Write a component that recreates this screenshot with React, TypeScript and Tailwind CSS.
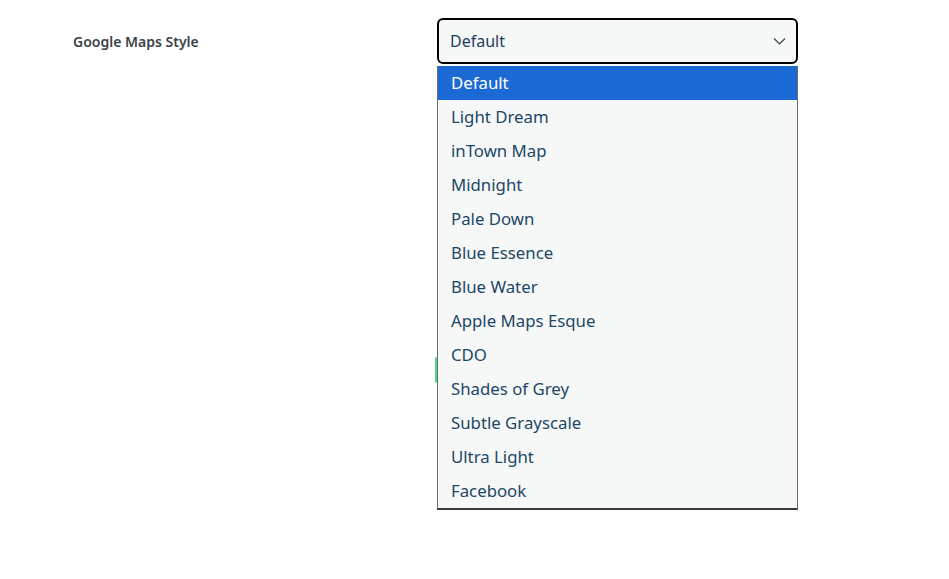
const styles = [
  "Default",
  "Light Dream",
  "inTown Map",
  "Midnight",
  "Pale Down",
  "Blue Essence",
  "Blue Water",
  "Apple Maps Esque",
  "CDO",
  "Shades of Grey",
  "Subtle Grayscale",
  "Ultra Light",
  "Facebook",
];

export default function App() {
  return (
    <div className="relative h-[579px] w-[949px] bg-white font-['Noto_Sans',sans-serif]">
      <div className="flex items-start pt-[18px]">
        <div className="w-[437px] pl-[73px] pt-[13px] text-[14px] font-semibold text-[#3c434a]">
          Google Maps Style
        </div>
        <div className="relative w-[361px]">
          <div className="flex h-[46px] items-center justify-between rounded-[6px] border-2 border-black bg-[#f6f7f7] pl-[11px] pr-[10px] text-[16px] text-[#1d3d5c]">
            <span>Default</span>
            <svg width="13" height="8" viewBox="0 0 13 8" fill="none" stroke="#3c434a" strokeWidth="1.2">
              <path d="M1 1.5l5.5 5.5 5.5-5.5" />
            </svg>
          </div>
          {/* partially hidden control behind the open list */}
          <div className="absolute left-[-2px] top-[339px] h-[26px] w-[2px] rounded-l bg-[#4ade80]" />
          <ul className="absolute left-0 top-[48px] z-10 w-[361px] border border-b-2 border-[#6b6b6b] border-b-[#3a3a3a] border-t-0 bg-[#f6f7f7]">
            {styles.map((s, i) => (
              <li
                key={s}
                className={
                  i === 0
                    ? "flex h-[34px] items-center bg-[#1b69d4] pl-[13px] text-[16.8px] text-white"
                    : "flex h-[34px] items-center pl-[13px] text-[16.8px] text-[#1d4766]"
                }
              >
                {s}
              </li>
            ))}
          </ul>
        </div>
      </div>
    </div>
  );
}
